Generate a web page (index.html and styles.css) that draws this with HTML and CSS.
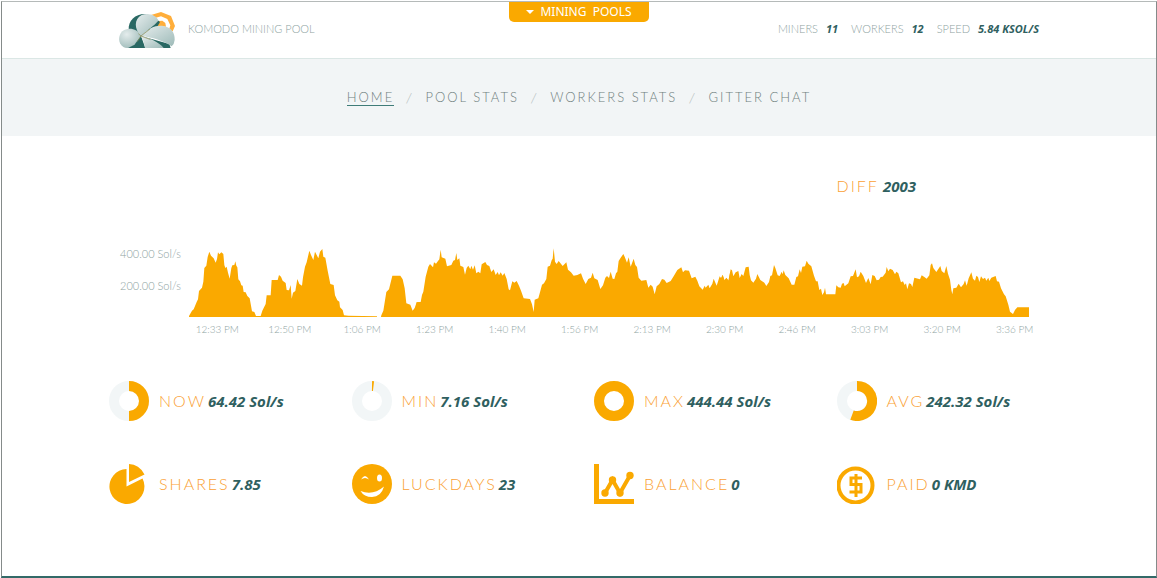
FILE: index.html
```html
<!DOCTYPE html>
<html lang="en">
<head>
<meta charset="utf-8">
<title>Komodo Mining Pool</title>
<link rel="stylesheet" href="styles.css">
</head>
<body>
<div class="frame">
  <button class="pools-tab" type="button"><span class="caret"></span><span>MINING&nbsp; POOLS</span></button>
  <header class="header">
    <div class="container header-row">
      <a class="brand" href="#">
        <svg class="logo" viewBox="57 36 168 108" aria-hidden="true">
          <defs>
            <linearGradient id="petal" x1="0" y1="0" x2="1" y2="1">
              <stop offset="0" stop-color="#e6eded"/><stop offset="1" stop-color="#9dbab8"/>
            </linearGradient>
            <radialGradient id="ball" cx=".35" cy=".3" r=".8">
              <stop offset="0" stop-color="#e4ecec"/><stop offset="1" stop-color="#9dbab8"/>
            </radialGradient>
          </defs>
          <path fill="#ffae3b" d="M153 45 183 36 213 48 225 78 218 94 207 90 211 76 202 57 183 49 165 54Z"/>
          <path fill="#ffae3b" d="M170 70 176 63 187 62 196 69 198 80 174 78Z"/>
          <path fill="#296863" d="M86 90C84 60 108 40 138 42L160 50 180 66 172 80 123 108Z"/>
          <path fill="#296863" d="M123 108 180 140 188 144H212L208 132Z"/>
          <path fill="url(#ball)" d="M123 108C113 84 82 80 67 94 53 108 54 131 70 141Q77 145 88 143 112 132 123 108Z"/>
          <path fill="#296863" d="M123 108 103 134 84 144H136Z"/>
          <path fill="url(#petal)" d="M123 108C102 87 102 57 125 45 146 37 171 47 175 62 160 80 145 86 123 108Z"/>
          <path fill="url(#petal)" d="M123 108C145 84 168 75 190 78 214 82 225 98 224 120Q223 132 215 139C190 122 158 112 123 108Z"/>
          <path fill="url(#petal)" d="M123 108C151 114 179 128 191 144H135Q133 125 123 108Z"/>
          <path fill="none" stroke="#8b8b52" stroke-width="2" d="M115 101 123 108 150 87M123 108 152 119M123 108 112 125"/>
        </svg>
        <span>KOMODO MINING POOL</span>
      </a>
      <dl class="summary">
        <div><dt>MINERS</dt><dd>11</dd></div>
        <div><dt>WORKERS</dt><dd>12</dd></div>
        <div><dt>SPEED</dt><dd>5.84 KSOL/S</dd></div>
      </dl>
    </div>
  </header>
  <nav class="nav">
    <a class="active" href="#">HOME</a><i>/</i>
    <a href="#">POOL STATS</a><i>/</i>
    <a href="#">WORKERS STATS</a><i>/</i>
    <a href="#">GITTER CHAT</a>
  </nav>
  <main class="container main">
    <div class="grid diff-row">
      <div class="stat diff"><span class="label">DIFF</span><b>2003</b></div>
    </div>
    <section class="chart">
      <div class="y-axis"><span>400.00 Sol/s</span><span>200.00 Sol/s</span></div>
      <div class="plot">
        <svg class="area" viewBox="267 36 2520 210" preserveAspectRatio="none" role="img" aria-label="Hash rate">
          <polygon points="267,246 267,243 276,227 281,223 290,201 294,193 297,168 306,158 310,140 313,99 319,92 323,66 328,50 333,62 341,70 347,83 351,72 354,52 358,58 364,52 370,57 373,90 376,99 380,95 384,113 389,131 394,99 397,91 403,90 406,79 409,92 412,97 415,133 420,139 424,151 428,152 431,171 437,172 442,183 449,190 456,229 463,231 468,243 482,243 487,227 497,207 500,181 512,181 515,135 533,135 537,120 543,125 548,137 557,144 560,165 567,166 572,150 575,191 579,173 586,168 592,132 598,147 606,152 609,127 615,95 620,82 628,47 633,60 640,75 645,50 655,70 660,50 667,42 670,65 676,68 683,107 691,147 701,150 705,181 712,196 718,200 720,217 728,225 732,241 745,242 831,244 831,246"/>
          <polygon points="843,246 844,241 850,227 859,171 867,163 877,122 901,122 908,133 914,160 919,205 931,209 938,227 944,219 950,202 963,202 963,246"/>
          <g transform="translate(930 0)">
            <polygon points="18,246 20,202 32,201 36,180 40,170 47,125 55,95 60,87 65,92 69,97 72,82 78,86 84,78 88,73 92,44 95,67 106,71 111,94 124,90 130,77 135,75 139,54 142,75 148,70 151,92 160,96 165,119 170,99 175,92 181,103 184,92 189,104 194,91 199,115 205,110 211,115 215,88 226,81 231,90 238,93 244,111 251,103 257,120 263,111 267,121 272,112 278,122 283,114 290,132 296,163 300,166 307,139 313,143 320,138 327,152 333,167 341,190 360,192 366,208 371,231 374,194 385,190 391,168 396,149 402,145 409,132 413,95 420,92 425,76 428,71 431,40 435,80 440,87 446,78 458,93 469,82 474,104 483,112 491,122 502,120 513,115 519,131 527,147 535,132 543,128 548,113 553,130 563,135 571,162 579,151 586,128 591,123 597,129 602,110 608,131 613,132 618,115 622,110 626,78 632,68 640,57 644,65 651,83 656,67 662,95 671,71 676,90 681,96 686,128 694,137 709,135 715,158 722,149 728,155 734,178 740,154 748,147 756,132 763,134 770,144 782,138 790,125 802,105 814,97 819,112 825,106 837,107 845,130 856,125 862,137 868,154 878,164 884,152 887,158 895,149 899,160 907,146 911,131 920,152 929,124 933,129 938,119 944,139 949,128 956,137 960,115 960,246"/>
          </g>
          <g transform="translate(1860 0)">
            <polygon points="0,246 0,128 4,132 8,120 13,135 19,129 25,137 32,103 36,106 40,124 47,112 55,108 59,129 65,117 70,123 77,97 86,95 89,120 93,136 100,143 108,131 112,117 121,135 133,143 139,153 147,141 151,123 156,121 162,90 166,99 173,121 179,123 185,110 188,118 191,106 196,120 206,130 215,149 223,149 229,126 234,124 239,103 243,114 247,95 255,94 260,77 265,86 274,94 282,122 288,139 293,139 298,165 303,161 307,180 312,172 315,158 318,178 346,178 349,151 355,157 362,158 366,146 371,144 374,154 385,145 392,124 399,123 407,103 411,127 417,124 422,110 430,123 438,144 445,129 452,148 457,120 464,123 470,136 477,134 482,126 488,125 497,113 500,96 505,109 510,101 518,105 525,118 529,110 535,115 543,142 549,139 554,150 558,145 562,163 567,145 573,147 577,156 583,128 600,133 605,121 613,126 620,131 628,121 632,90 636,85 640,99 649,111 661,93 665,108 673,115 679,93 684,116 690,134 694,165 697,178 700,160 709,158 716,146 723,157 731,147 735,136 740,152 746,130 754,112 759,131 765,137 769,122 774,126 778,141 783,124 789,132 795,128 799,137 805,128 808,138 814,128 827,123 831,139 837,140 843,160 852,178 857,184 865,209 870,230 879,237 885,225 892,217 927,217 927,246"/>
          </g>
        </svg>
        <div class="x-axis"><span>12:33 PM</span><span>12:50 PM</span><span>1:06 PM</span><span>1:23 PM</span><span>1:40 PM</span><span>1:56 PM</span><span>2:13 PM</span><span>2:30 PM</span><span>2:46 PM</span><span>3:03 PM</span><span>3:20 PM</span><span>3:36 PM</span></div>
      </div>
    </section>
    <section class="grid stats">
      <div class="stat"><svg class="icon" viewBox="0 0 40 40"><circle class="track" cx="20" cy="20" r="15"/><path class="ring" d="M20 5A15 15 0 0 1 20 35"/></svg><span class="label">NOW</span><b>64.42 Sol/s</b></div>
      <div class="stat"><svg class="icon" viewBox="0 0 40 40"><circle class="track" cx="20" cy="20" r="15"/><path class="ring" d="M20 5A15 15 0 0 1 21.500 5.100"/></svg><span class="label">MIN</span><b>7.16 Sol/s</b></div>
      <div class="stat"><svg class="icon" viewBox="0 0 40 40"><circle class="ring" cx="20" cy="20" r="15"/></svg><span class="label">MAX</span><b>444.44 Sol/s</b></div>
      <div class="stat"><svg class="icon" viewBox="0 0 40 40"><circle class="track" cx="20" cy="20" r="15"/><path class="ring" d="M20 5A15 15 0 1 1 15 34.100"/></svg><span class="label">AVG</span><b>242.32 Sol/s</b></div>
      <div class="stat"><svg class="icon" viewBox="0 0 40 40"><path d="M17.500 5V22.500L33.500 14.500A17.500 17.500 0 1 1 17.500 5ZM20 0Q30 0 35.500 10.500L20 18Z"/></svg><span class="label">SHARES</span><b>7.85</b></div>
      <div class="stat"><svg class="icon" viewBox="0 0 40 40"><circle cx="20" cy="20" r="20"/><ellipse class="white" cx="27.500" cy="14" rx="2.500" ry="3.600"/><path class="white" d="M9 15.500Q13 8.500 17 15.500 13 12.500 9 15.500ZM8.500 27Q21 32 32 22.500 29 33 20 33 12 33 8.500 27Z"/></svg><span class="label">LUCKDAYS</span><b>23</b></div>
      <div class="stat"><svg class="icon" viewBox="0 0 40 40"><path d="M0 0H5V35H40V40H0Z"/><path class="line" d="M11 29 18.500 16 26 29 36 11.500"/><circle cx="11" cy="29" r="3.700"/><circle cx="18.500" cy="16" r="3.700"/><circle cx="26" cy="29" r="3.700"/><circle cx="36" cy="11.500" r="3.700"/></svg><span class="label">BALANCE</span><b>0</b></div>
      <div class="stat"><svg class="icon" viewBox="0 0 40 40"><circle class="coin" cx="18.500" cy="21.500" r="17"/><path class="dollar" d="M25 14H14V20.500H24V28H12.500M19 10V33"/></svg><span class="label">PAID</span><b>0 KMD</b></div>
    </section>
  </main>
</div>
</body>
</html>
```
FILE: styles.css
```css
* { box-sizing: border-box; }
body {
  margin: 0;
  padding: 1px 0 0 1px;
  min-height: 100vh;
  display: flex;
  background: #fff;
  color: #8ea3a2;
  font: 300 11px/16px Lato, "Open Sans", sans-serif;
}
a { color: inherit; text-decoration: none; }
b, dd { font-family: "Open Sans", sans-serif; font-weight: 700; font-style: italic; color: #2f6060; }
.frame {
  position: relative;
  flex: 1;
  border: 1px solid #858b8a;
  border-top-color: #b5bab9;
  border-bottom: 2px solid #326a68;
}
.container { width: 100%; max-width: 970px; margin: 0 auto; }
.pools-tab {
  position: absolute;
  top: 0;
  left: 50%;
  transform: translateX(-50%);
  width: 140px;
  height: 20px;
  padding: 0;
  display: flex;
  justify-content: center;
  align-items: center;
  gap: 6px;
  border: 0;
  border-radius: 0 0 5px 5px;
  background: #faa900;
  color: #fff;
  font: 400 12px/20px "Noto Sans", sans-serif;
}
.caret { border: 4px solid transparent; border-top-color: #fff; border-bottom: 0; }
.header { height: 57px; border-bottom: 1px solid #dbe7e5; }
.header-row { height: 54px; padding: 0 25px; display: flex; justify-content: space-between; align-items: center; }
.brand { display: flex; align-items: center; gap: 13px; }
.logo { width: 56px; height: 36px; margin-top: 2px; }
.summary { display: flex; gap: 13px; margin: 0; }
.summary div { display: flex; gap: 8px; }
.summary dd { margin: 0; }
.nav {
  height: 77px;
  display: flex;
  justify-content: center;
  align-items: center;
  gap: 12px;
  background: #f2f5f6;
  color: #6f807e;
  font-size: 13px;
  letter-spacing: 2px;
}
.nav a { border-bottom: 1px solid transparent; }
.nav .active { border-color: #3f7c78; }
.nav i { color: #a5b0b0; }
.grid { display: grid; grid-template-columns: repeat(4, 1fr); }
.grid > * { padding-left: 15px; }
.diff-row { padding-top: 38px; }
.diff { grid-column: 4; }
.stat { display: flex; align-items: center; gap: 2px; line-height: 24px; }
.stat b { font-size: 15px; }
.diff { gap: 4px; }
.label { color: #fa9f35; font-size: 16px; letter-spacing: 2px; }
.icon { width: 40px; height: 40px; margin-right: 8px; fill: #faa900; }
.track { fill: none; stroke: #f2f6f7; stroke-width: 10; }
.ring { fill: none; stroke: #faa900; stroke-width: 10; }
.white { fill: #fff; }
.line { fill: none; stroke: #faa900; stroke-width: 4; }
.coin { fill: none; stroke: #faa900; stroke-width: 4; }
.dollar { fill: none; stroke: #faa900; stroke-width: 3; }
.chart { display: grid; grid-template-columns: 87px 1fr; padding: 40px 13px 0 0; }
.y-axis { display: flex; flex-direction: column; text-align: right; line-height: 32px; }
.area { display: block; width: calc(100% - 30px); height: 70px; margin: 9px 0 0 8px; fill: #faa900; }
.x-axis { display: grid; grid-template-columns: repeat(12, 1fr); text-align: center; font-size: 10px; line-height: 24px; }
.stats { row-gap: 43px; padding: 40px 0 64px; }
```
